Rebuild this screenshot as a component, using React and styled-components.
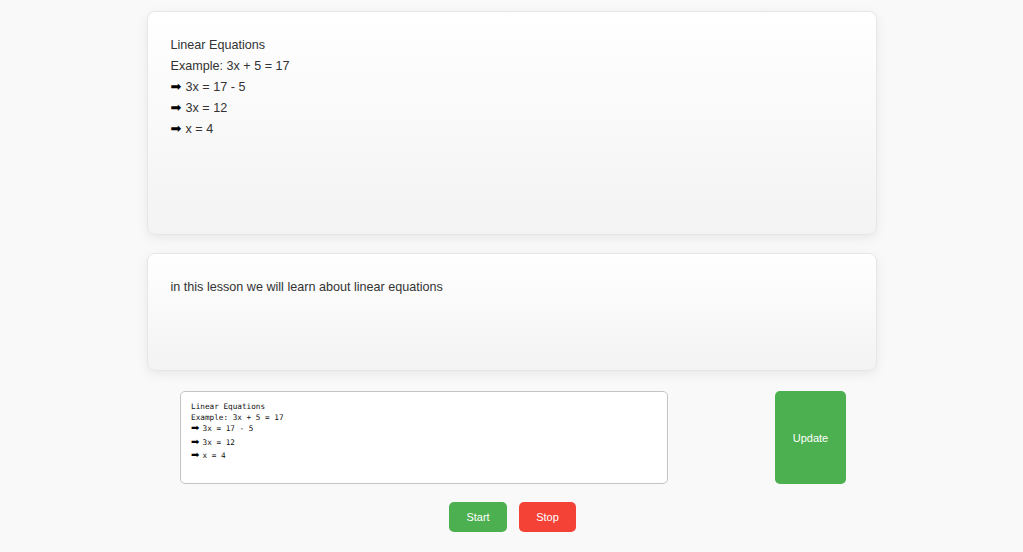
import React from 'react'
import styled, { createGlobalStyle } from 'styled-components'

const GlobalStyle = createGlobalStyle`
  html, body {
    margin: 0;
    background: #f9f9f9;
  }
  body {
    font-family: "Liberation Sans", Arial, sans-serif;
    color: #333;
  }
`

const Page = styled.main`
  display: flex;
  flex-direction: column;
  align-items: center;
  padding: 11px 0 20px;
`

const Card = styled.section`
  box-sizing: border-box;
  width: 730px;
  height: ${p => p.$height}px;
  margin-bottom: ${p => p.$gap}px;
  padding: 23px 23px;
  background: linear-gradient(180deg, #ffffff 0%, #f3f3f3 100%);
  border: 1px solid #e6e6e6;
  border-radius: 8px;
  box-shadow: 0 3px 12px rgba(0, 0, 0, 0.07);
  font-size: 12.6px;
  line-height: 21px;
`

const Line = styled.div`
  white-space: pre;
  height: 21px;
`

const EditRow = styled.div`
  display: flex;
  justify-content: space-between;
  width: 666px;
  margin-left: 3px;
  margin-bottom: 18px;
`

const Editor = styled.div`
  box-sizing: border-box;
  width: 488px;
  height: 93px;
  padding: 10px 10px;
  background: #fff;
  border: 1px solid #c4c4c4;
  border-radius: 5px;
  font-family: "DejaVu Sans Mono", "Liberation Mono", monospace;
  font-size: 7.7px;
  color: #111;
`

const EditLine = styled.div`
  white-space: pre;
  height: 10.5px;
  line-height: 10.5px;
  margin-top: ${p => p.$space}px;
`

const Arrow = styled.span`
  font-family: "DejaVu Sans", sans-serif;
  font-size: ${p => p.$size || 12}px;
  line-height: 0;
  color: #000;
`

const Button = styled.button`
  border: none;
  border-radius: 5px;
  color: #fff;
  font-family: "Liberation Sans", Arial, sans-serif;
  font-size: 11px;
  cursor: pointer;
  background: ${p => (p.$danger ? '#f44336' : '#4caf50')};
  width: ${p => p.$w}px;
  height: ${p => p.$h}px;
  padding: 0;
`

const Controls = styled.div`
  display: flex;
  gap: 12px;
  margin-left: 2px;
`

const lesson = [
  'Linear Equations',
  'Example: 3x + 5 = 17',
  '3x = 17 - 5',
  '3x = 12',
  'x = 4',
]

const editSpacing = [0, 0, 0.5, 3.5, 3]

export default function App() {
  return (
    <>
      <GlobalStyle />
      <Page>
        <Card $height={224} $gap={18}>
          {lesson.map((t, i) => (
            <Line key={i}>
              {i > 1 && <Arrow $size={13}>➡ </Arrow>}
              {t}
            </Line>
          ))}
        </Card>
        <Card $height={118} $gap={20}>
          <Line>in this lesson we will learn about linear equations</Line>
        </Card>
        <EditRow>
          <Editor>
            {lesson.map((t, i) => (
              <EditLine key={i} $space={editSpacing[i]}>
                {i > 1 && <Arrow $size={10}>➡ </Arrow>}
                {t}
              </EditLine>
            ))}
          </Editor>
          <Button $w={71} $h={93}>Update</Button>
        </EditRow>
        <Controls>
          <Button $w={58} $h={30}>Start</Button>
          <Button $w={57} $h={30} $danger>Stop</Button>
        </Controls>
      </Page>
    </>
  )
}
